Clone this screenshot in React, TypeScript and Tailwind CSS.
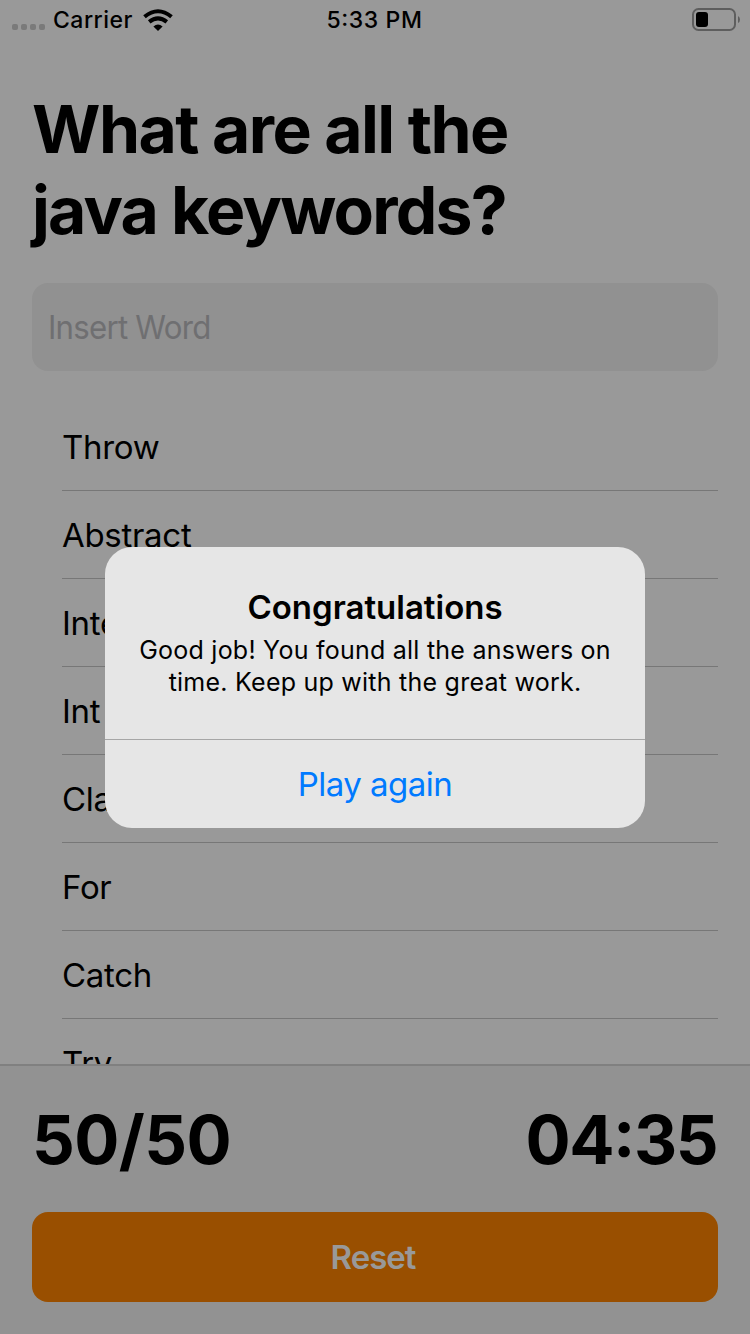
import React from "react";

const words = ["Throw", "Abstract", "Interface", "Int", "Class", "For", "Catch", "Try"];

function WifiIcon() {
  return (
    <svg className="ml-2.5" width="30" height="22" viewBox="0 0 30 22">
      <g fill="none" stroke="black" strokeWidth="4">
        <path d="M1.5 7.8Q15-3.4 28.5 7.8" />
        <path d="M6.2 12.9Q15 5.9 23.8 12.9" />
      </g>
      <path d="M10.4 17.4Q15 13.4 19.6 17.4L15 22Z" />
    </svg>
  );
}

function BatteryIcon() {
  return (
    <svg width="48" height="24" viewBox="0 0 48 24">
      <rect x="1" y="1" width="42" height="21" rx="5.5" fill="none" stroke="#5e5e5e" strokeWidth="2" />
      <rect x="4" y="4" width="12" height="15" rx="3" fill="black" />
      <path d="M46 8Q48 9 48 11.5T46 15Z" fill="#5e5e5e" />
    </svg>
  );
}

function CompletionAlert() {
  return (
    <div className="absolute inset-0 flex justify-center pt-[547px]">
      <div role="alertdialog" className="flex h-[281px] w-[540px] flex-col overflow-hidden rounded-[27px] bg-[#e6e6e6] text-center">
        <div className="h-[192px] pt-[39px]">
          <h2 className="text-[33px] leading-[42px] font-semibold">Congratulations</h2>
          <p className="mt-[6px] text-[25px] leading-8 tracking-[0.24px]">
            Good job! You found all the answers on
            <br />
            time. Keep up with the great work.
          </p>
        </div>
        <button className="flex-1 border-t border-[#a6a6a6] pt-0.5 text-[33px] tracking-[-0.5px] text-[#007aff]">Play again</button>
      </div>
    </div>
  );
}

export default function App() {
  return (
    <div className="relative flex h-[1334px] w-[750px] flex-col overflow-hidden bg-[#999999] font-['Inter',sans-serif] text-black">
      <header className="grid h-10 shrink-0 grid-cols-3 items-center pr-2.5 pl-3">
        <div className="flex items-center">
          <div className="mt-3.5 flex gap-[3px]">
            {[0, 1, 2, 3].map((i) => (
              <i key={i} className="size-1.5 rounded-[2px] bg-[#7a7a7a]" />
            ))}
          </div>
          <span className="ml-2 text-[23px] font-medium tracking-[0.5px]">Carrier</span>
          <WifiIcon />
        </div>
        <span className="pr-[3px] text-center text-[23px] font-medium tracking-[0.6px] [font-feature-settings:'case']">5:33 PM</span>
        <div className="flex justify-end">
          <BatteryIcon />
        </div>
      </header>
      <h1 className="mt-[49px] h-[164px] px-8 text-[66px] leading-[81px] font-bold">
        <span className="block tracking-[-1.55px]">What are all the</span>
        <span className="block tracking-[-1.8px]">java keywords?</span>
      </h1>
      <div className="mx-8 mt-[30px] flex h-[88px] shrink-0 items-center rounded-[16px] bg-[#919191] px-4 pt-0.5 text-[33px] tracking-[-0.8px] text-[#6f6f71]">
        <span className="origin-left scale-x-[0.945]">Insert Word</span>
      </div>
      <ul className="mt-8 mr-8 ml-[62px] h-[661px] overflow-hidden">
        {words.map((w) => (
          <li key={w} className="flex h-[88px] items-center border-b border-[#777] pt-0.5 text-[33px] tracking-[-0.3px]">
            {w}
          </li>
        ))}
      </ul>
      <footer className="h-[270px] shrink-0 border-t-2 border-[#808080] bg-[#929292] px-8">
        <div className="flex h-[146px] items-center justify-between pt-0.5 text-[67px] font-bold">
          <span className="tracking-[-0.6px]">50/50</span>
          <span className="pr-px tracking-[-1.5px] [font-feature-settings:'case']">04:35</span>
        </div>
        <button className="h-[90px] w-full rounded-[16px] bg-[#994f00] pt-0.5 pr-1 text-[33px] font-semibold tracking-[-1px] text-[#999]">Reset</button>
      </footer>
      <CompletionAlert />
    </div>
  );
}
